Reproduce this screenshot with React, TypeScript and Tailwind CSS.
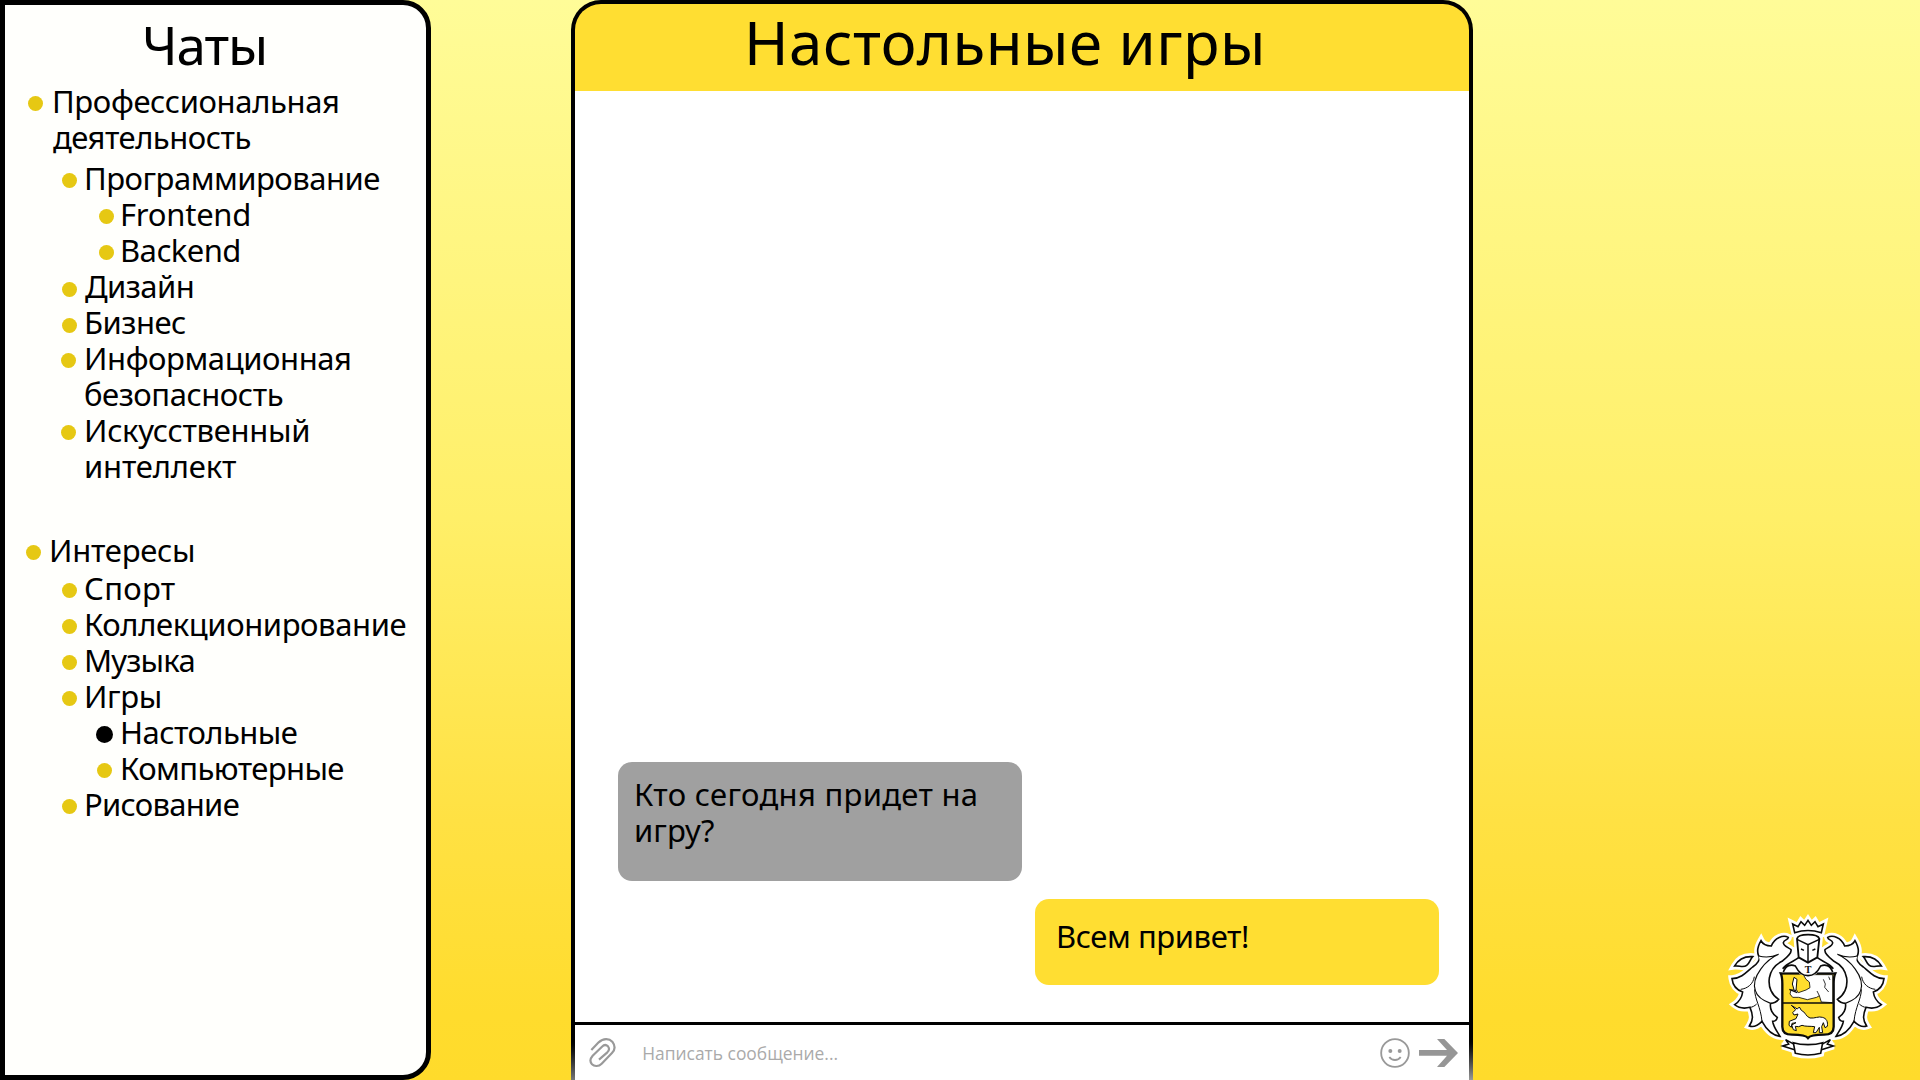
type ChatItem = {
  lines: { text: string; style: string }[];
  row: string;
  dot: string;
  active?: boolean;
};

const L2 = 'pl-[57px] gap-[7px]';
const L3 = 'pl-[94px] gap-[6px]';

const work: ChatItem[] = [
  {
    row: 'pl-[23px] gap-[9px] mb-[5px]',
    dot: 'mt-[13px]',
    lines: [
      { text: 'Профессиональная', style: 'tracking-[-0.36px]' },
      { text: 'деятельность', style: 'tracking-[-0.5px] pl-px' },
    ],
  },
  { row: L2, dot: 'mt-[13px]', lines: [{ text: 'Программирование', style: 'tracking-[-0.5px]' }] },
  { row: L3, dot: 'mt-[13px]', lines: [{ text: 'Frontend', style: 'tracking-[-0.25px]' }] },
  { row: L3, dot: 'mt-[13px]', lines: [{ text: 'Backend', style: 'tracking-[-0.55px]' }] },
  { row: L2, dot: 'mt-[14px]', lines: [{ text: 'Дизайн', style: 'tracking-[-0.55px] pl-px' }] },
  { row: L2, dot: 'mt-[14px]', lines: [{ text: 'Бизнес', style: 'tracking-[-0.51px]' }] },
  {
    row: 'pl-[56px] gap-[8px]',
    dot: 'mt-[13px]',
    lines: [
      { text: 'Информационная', style: 'tracking-[-0.42px]' },
      { text: 'безопасность', style: 'tracking-[-0.45px]' },
    ],
  },
  {
    row: 'pl-[56px] gap-[8px]',
    dot: 'mt-[13px]',
    lines: [
      { text: 'Искусственный', style: 'tracking-[-0.3px]' },
      { text: 'интеллект', style: 'tracking-[-0.18px]' },
    ],
  },
];

const interests: ChatItem[] = [
  { row: 'pl-[21px] gap-[8px] mb-[2px]', dot: 'mt-[13px]', lines: [{ text: 'Интересы', style: 'tracking-[-0.25px]' }] },
  { row: L2, dot: 'mt-[13px]', lines: [{ text: 'Спорт', style: 'tracking-[0.3px]' }] },
  { row: L2, dot: 'mt-[13px]', lines: [{ text: 'Коллекционирование', style: 'tracking-[-0.4px]' }] },
  { row: L2, dot: 'mt-[13px]', lines: [{ text: 'Музыка', style: 'tracking-[-0.8px]' }] },
  { row: L2, dot: 'mt-[13px]', lines: [{ text: 'Игры', style: 'tracking-[-0.4px]' }] },
  { row: 'pl-[91px] gap-[7px]', dot: 'mt-[12px]', active: true, lines: [{ text: 'Настольные', style: 'tracking-[-0.55px]' }] },
  { row: 'pl-[92px] gap-[8px]', dot: 'mt-[13px]', lines: [{ text: 'Компьютерные', style: 'tracking-[-0.58px]' }] },
  { row: L2, dot: 'mt-[13px]', lines: [{ text: 'Рисование', style: 'tracking-[-0.72px]' }] },
];

function ChatList({ items, className }: { items: ChatItem[]; className: string }) {
  return (
    <ul className={className}>
      {items.map((item) => (
        <li key={item.lines[0].text} className={`flex items-start ${item.row}`}>
          <span
            className={`shrink-0 rounded-full ${item.active ? 'size-[17px] bg-black' : 'size-[15px] bg-[#e6c813]'} ${item.dot}`}
          />
          <span className="flex flex-col text-[31px] leading-9 whitespace-nowrap">
            {item.lines.map((line) => (
              <span key={line.text} className={line.style}>
                {line.text}
              </span>
            ))}
          </span>
        </li>
      ))}
    </ul>
  );
}

function Mantling() {
  return (
    <>
      <path d="M186 154C200 142 216 130 213 119C205 112 190 108 190 98C192 88 204 91 205 82C190 74 164 82 154 108C140 108 128 102 123 92C116 104 108 120 116 138C122 148 112 162 98 171C82 184 64 206 36 206C38 224 50 240 68 246C66 262 56 276 44 284C56 294 74 296 90 292C100 316 100 330 88 348C104 354 116 344 126 334C138 356 154 376 180 379C170 362 160 350 158 334C166 334 170 330 172 322C158 314 148 296 152 280C162 280 170 276 176 268C156 256 144 232 148 204C152 182 166 164 186 154Z" />
      <path d="M44 168C54 150 68 138 98 140C90 148 90 158 80 166C70 174 58 166 44 168Z" />
      <path d="M116 138C140 144 160 140 176 133C140 148 92 200 106 242C112 262 134 274 152 280" strokeWidth="3.5" />
      <path d="M62 238C82 236 100 222 103 200M104 238C104 268 122 290 126 334M90 292C96 292 104 288 110 282" strokeWidth="3" />
    </>
  );
}

function CrestShapes() {
  return (
    <>
      <Mantling />
      <g transform="matrix(-1 0 0 1 528 0)">
        <Mantling />
      </g>
      <path d="M224 68L218 42L234 50L243 35L254 46L264 31L274 46L285 35L294 50L310 42L304 68C280 60 248 60 224 68Z" />
      <path d="M224 404L197 389L206 402L188 408L226 420M304 404L331 389L322 402L340 408L302 420" />
      <path d="M220 398C245 406 283 406 308 398L302 430C280 436 248 436 226 430Z" />
    </>
  );
}

function Crest() {
  return (
    <svg viewBox="0 0 540 465" className="h-[155px] w-[180px]" aria-hidden="true">
      <g fill="#fff" stroke="#fff" strokeWidth="21" strokeLinejoin="miter" strokeMiterlimit="2.5">
        <CrestShapes />
        <path d="M231 84H298L292 142L345 175V374L264 392L187 374V175L236 142Z" />
        <path d="M205 112H323V170H376L370 330L345 385H183L158 330L152 170H205Z" stroke="none" />
      </g>
      <g fill="#fff" stroke="#0b0b0b" strokeWidth="4.8" strokeLinejoin="miter">
        <CrestShapes />
        <path
          d="M182 190H346C341 200 341 208 341 222V350C341 366 330 374 312 374C290 374 270 376 264 384C258 376 238 374 216 374C198 374 187 366 187 350V222C187 208 187 200 182 190Z"
          fill="#ffdd2d"
          strokeWidth="7"
        />
        <path
          d="M250 194L258 208L268 216L270 233L258 240L235 248L229 239L213 240L210 252L218 262L236 262L262 269L290 262L298 257L304 276L338 278V194Z"
          strokeWidth="2.5"
        />
        <path d="M298 257L291 243M310 208L316 222L314 232L326 246M326 200L330 210" fill="none" strokeWidth="2.5" />
        <path d="M223 242L217 222L222 202L231 208L228 241Z" strokeWidth="3" />
        <path d="M208 238L232 248" strokeWidth="4" />
        <path d="M188 279H340" strokeWidth="4" />
        <path
          d="M214 286L232 297L238 291L244 301C257 306 257 320 270 324C284 326 296 318 307 322C320 325 324 335 322 349L315 353L310 338L305 350L308 368H298V352L288 368H280L284 350C270 348 256 350 246 346L236 350L226 349L229 362L220 359L215 345L228 338L216 340L214 352L207 346L208 334L228 326L234 312L222 315L218 308L227 299Z"
          strokeWidth="3"
        />
        <path
          d="M184 188C190 166 210 154 236 144H292C318 154 338 166 344 188H296C286 194 276 198 264 198C252 198 242 194 232 188Z"
          stroke="none"
        />
        <path
          d="M188 176C202 158 222 154 236 143M340 176C326 158 306 154 292 143M190 186C198 166 212 162 226 168C234 184 246 197 264 197C282 197 294 184 302 168C316 162 330 166 338 186M182 190H238M290 190H346"
          fill="none"
          strokeWidth="5"
        />
        <path d="M231 86C235 70 293 70 298 86L292 142L264 158L236 142Z" strokeWidth="5.5" />
        <path d="M231 88L264 104L298 88M264 104V158M243 117L252 121M286 117L277 121" fill="none" strokeWidth="4.5" />
      </g>
      <text
        x="264"
        y="189"
        textAnchor="middle"
        className="fill-[#0b0b0b] font-['Liberation_Serif',serif] text-[30px] font-bold"
      >
        Т
      </text>
    </svg>
  );
}

function PaperclipIcon() {
  return (
    <svg viewBox="88 115 82 92" className="h-[30.7px] w-[27.3px]" fill="none" stroke="#999" strokeWidth="6.5" aria-hidden="true">
      <path d="M95 154L117 131C131 118 149 119 158 129C167 141 166 154 157 163L126 195C117 204 104 204 97 197C90 189 92 179 99 171L127 144C133 138 140 138 145 143C150 149 148 156 143 161L118 183" />
    </svg>
  );
}

function SmileIcon() {
  return (
    <svg viewBox="0 0 90 90" className="size-[30px]" fill="none" stroke="#999" strokeWidth="5.5" aria-hidden="true">
      <circle cx="45" cy="45" r="41.5" />
      <path d="M28 57C36 69 54 69 62 57" />
      <circle cx="31" cy="39" r="6" fill="#999" stroke="none" />
      <circle cx="59" cy="39" r="6" fill="#999" stroke="none" />
    </svg>
  );
}

function SendIcon() {
  return (
    <svg viewBox="0 0 117 84" className="h-7 w-[39px]" fill="#969696" aria-hidden="true">
      <path d="M0 33H84L54 0H76L117 42L76 84H54L84 50H0Z" />
    </svg>
  );
}

export default function App() {
  return (
    <div className="flex h-[1080px] w-[1920px] overflow-hidden bg-[linear-gradient(180deg,#fffc98_0%,#ffef68_48%,#ffe143_76%,#ffdc2d_94%,#ffdb2b_100%)] font-['Noto_Sans',sans-serif] text-black">
      <aside className="h-full w-[431px] shrink-0 rounded-r-[28px] border-5 border-black bg-[#fffffc] pt-1">
        <h1 className="pl-[137px] text-[53px] leading-[72px] tracking-[-1.08px]">Чаты</h1>
        <ChatList items={work} className="mt-[2px]" />
        <ChatList items={interests} className="mt-12" />
      </aside>

      <main className="ml-[140px] flex h-full w-[902px] shrink-0 flex-col overflow-hidden rounded-t-[30px] bg-black pt-1">
        <header className="mx-1 h-[87px] shrink-0 rounded-t-[26px] bg-[#ffde32] pl-[169px]">
          <h2 className="text-[60px] leading-[76px] tracking-[0.47px] whitespace-nowrap">Настольные игры</h2>
        </header>

        <section className="mx-1 flex flex-1 flex-col justify-end gap-[18px] bg-white pr-[30px] pb-[37px] pl-[43px]">
          <div className="h-[119px] w-[404px] rounded-[14px] bg-[#a0a0a0] pt-[14px] pl-4 text-[31px] leading-9 whitespace-nowrap">
            <p className="tracking-[0.3px]">Кто сегодня придет на</p>
            <p className="tracking-[0.12px]">игру?</p>
          </div>
          <div className="h-[86px] w-[404px] self-end rounded-[14px] bg-[#ffde32] pt-[19px] pl-[21px] text-[31px] leading-9 tracking-[-0.42px]">
            Всем привет!
          </div>
        </section>

        <footer className="mt-[3px] flex h-[55px] shrink-0 bg-white">
          <span className="w-1 bg-linear-to-b from-black from-20% to-[#777]" />
          <div className="flex flex-1 items-center pr-[11px] pl-[14px]">
            <PaperclipIcon />
            <span className="ml-[26px] pt-px font-['Open_Sans',sans-serif] text-[17.4px] text-[#aaa]">
              Написать сообщение...
            </span>
            <span className="ml-auto flex items-center gap-[9px]">
              <SmileIcon />
              <SendIcon />
            </span>
          </div>
          <span className="w-1 bg-linear-to-b from-black from-20% to-[#999]" />
        </footer>
      </main>

      <div className="flex flex-1 items-end justify-end pr-5 pb-[15px]">
        <Crest />
      </div>
    </div>
  );
}
